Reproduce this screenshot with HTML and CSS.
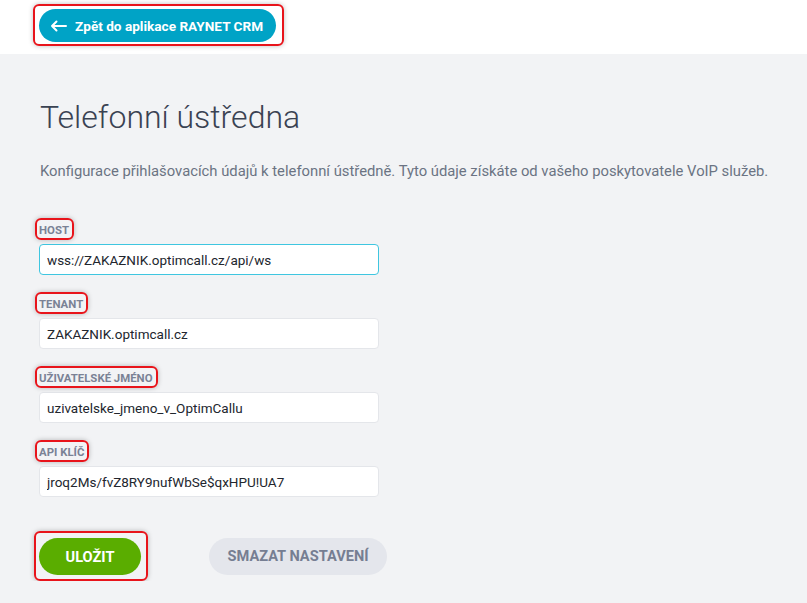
FILE: index.html
```html
<!DOCTYPE html>
<html lang="cs">
<head>
  <meta charset="UTF-8" />
  <meta name="viewport" content="width=device-width, initial-scale=1.0"/>
  <title>Telefonní ústředna - RAYNET CRM</title>
  <link rel="stylesheet" href="styles.css">
</head>
<body>

  <!-- Top bar -->
  <div class="topbar">
    <span class="mark mark-back">
      <a class="back" href="#">
        <svg width="17" height="12" viewBox="0 0 17 12" fill="none" stroke="#fff" stroke-width="2" stroke-linecap="round" stroke-linejoin="round">
          <path d="M16 6H2M6.5 1.5L2 6l4.5 4.5"/>
        </svg>
        Zpět do aplikace RAYNET CRM
      </a>
    </span>
  </div>

  <div class="content">
    <h1>Telefonní ústředna</h1>
    <p class="intro">Konfigurace přihlašovacích údajů k telefonní ústředně. Tyto údaje získáte od vašeho poskytovatele VoIP služeb.</p>

    <!-- Settings form -->
    <form class="settings">
      <div class="field">
        <span class="mark mark-label"><label for="host">Host</label></span>
        <input type="text" id="host" class="focused" value="wss://ZAKAZNIK.optimcall.cz/api/ws">
      </div>

      <div class="field">
        <span class="mark mark-label"><label for="tenant">Tenant</label></span>
        <input type="text" id="tenant" value="ZAKAZNIK.optimcall.cz">
      </div>

      <div class="field">
        <span class="mark mark-label"><label for="user">Uživatelské jméno</label></span>
        <input type="text" id="user" value="uzivatelske_jmeno_v_OptimCallu">
      </div>

      <div class="field">
        <span class="mark mark-label"><label for="apikey">API klíč</label></span>
        <input type="text" id="apikey" value="jroq2Ms/fvZ8RY9nufWbSe$qxHPU!UA7">
      </div>

      <div class="actions">
        <span class="mark mark-save"><button type="button" class="btn save">Uložit</button></span>
        <button type="button" class="btn reset">Smazat nastavení</button>
      </div>
    </form>
  </div>

</body>
</html>
```

FILE: styles.css
```css
* {
  box-sizing: border-box;
}
body {
  margin: 0;
  font-family: Roboto, "Liberation Sans", Arial, sans-serif;
  background: #f2f3f5;
  color: #3a4252;
}
.topbar {
  background: #fff;
  height: 54px;
  padding: 4px 0 0 33px;
}
/* red highlight frames */
.mark {
  display: inline-block;
  border: 2px solid #e8141b;
  border-radius: 6px;
  box-shadow: 0 0 5px rgba(0,0,0,0.25);
}
.mark-back {
  padding: 3px 6px 2px 4px;
}
.back {
  display: inline-flex;
  align-items: center;
  gap: 8px;
  height: 33px;
  padding: 0 13px 0 11px;
  background: #00a3c6;
  color: #fff;
  border-radius: 17px;
  font-size: 13.6px;
  font-weight: 700;
  text-decoration: none;
}
.content {
  padding: 44px 0 0 39px;
}
h1 {
  margin: 0 0 0 1px;
  font-size: 32px;
  font-weight: 300;
  color: #3a4252;
}
.intro {
  margin: 26px 0 0 1px;
  font-size: 14.8px;
  color: #6b7383;
  white-space: nowrap;
}
.settings {
  margin-top: 38px;
  width: 340px;
}
.field {
  margin-bottom: 17px;
}
.mark-label {
  margin-left: -4px;
  padding: 2px 3px 1px 2px;
  line-height: 13px;
}
label {
  font-size: 11.4px;
  font-weight: 700;
  text-transform: uppercase;
  color: #7a8295;
}
input {
  display: block;
  width: 100%;
  height: 31px;
  margin-top: 4px;
  padding: 0 7px;
  border: 1px solid #e4e6ea;
  border-radius: 4px;
  background: #fff;
  font-family: inherit;
  font-size: 13.5px;
  color: #22262e;
  outline: none;
}
input.focused {
  border-color: #3fc6e0;
}
.actions {
  display: flex;
  align-items: center;
  gap: 61px;
  margin-top: 34px;
  margin-left: -5px;
}
.mark-save {
  padding: 5px 5px 4px 3px;
}
.btn {
  display: block;
  flex-shrink: 0;
  height: 37px;
  border: none;
  border-radius: 19px;
  font-family: inherit;
  font-size: 14.6px;
  font-weight: 700;
  text-transform: uppercase;
  cursor: pointer;
}
.save {
  width: 102px;
  background: #5aad00;
  color: #fff;
}
.reset {
  width: 178px;
  background: #e4e6ec;
  color: #767e92;
}
```
